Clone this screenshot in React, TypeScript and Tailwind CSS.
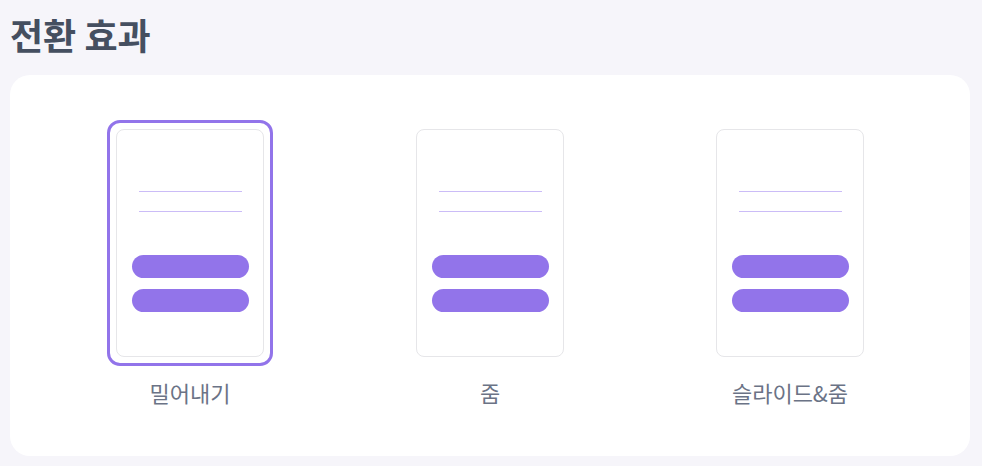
const options = [
  { label: '밀어내기', selected: true },
  { label: '줌', selected: false },
  { label: '슬라이드&줌', selected: false },
];

function Preview() {
  return (
    <div className="flex h-[228px] w-[148px] flex-col items-center rounded-[8px] border border-[#e6e6e9] bg-white pt-[61px]">
      <div className="h-px w-[103px] bg-[#cbbcf7]" />
      <div className="mt-[19px] h-px w-[103px] bg-[#cbbcf7]" />
      <div className="mt-[43px] h-[23px] w-[117px] rounded-full bg-[#9274ea]" />
      <div className="mt-[11px] h-[23px] w-[117px] rounded-full bg-[#9274ea]" />
    </div>
  );
}

export default function App() {
  return (
    <div
      className="min-h-[466px] w-[982px] bg-[#f6f5fa] px-[10px] pt-[10px]"
      style={{ fontFamily: '"Noto Sans CJK KR", "Noto Sans", sans-serif' }}
    >
      <h1 className="text-[36px] font-bold leading-[48px] text-[#454f60]">전환 효과</h1>
      <div className="mt-[17px] grid h-[381px] w-[960px] grid-cols-3 rounded-[20px] bg-white px-[30px] pt-[45px]">
        {options.map((o) => (
          <div key={o.label} className="flex flex-col items-center">
            <div
              className={`rounded-[13px] border-[3px] p-[6px] ${
                o.selected ? 'border-[#9274ea]' : 'border-transparent'
              }`}
            >
              <Preview />
            </div>
            <p className="mt-[11px] text-[22px] leading-[30px] text-[#6b7386]">{o.label}</p>
          </div>
        ))}
      </div>
    </div>
  );
}
